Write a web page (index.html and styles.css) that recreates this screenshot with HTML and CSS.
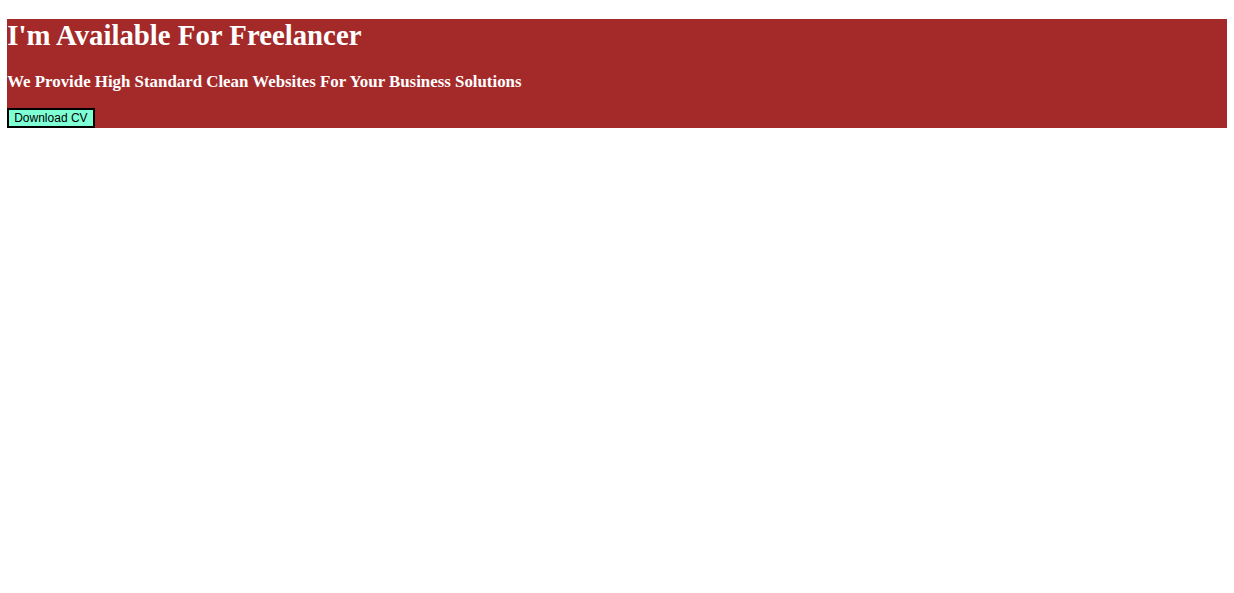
FILE: index.html
```html
<!DOCTYPE html>
<html>
<head>
<meta charset="utf-8">
<link rel="stylesheet" href="styles.css">
</head>
<body>
<div class="hero">
  <h1 class="hero-title">I'm Available For Freelancer</h1>
  <h3 class="hero-sub">We Provide High Standard Clean Websites For Your Business Solutions</h3>
  <button class="cv-btn">Download CV</button>
</div>
</body>
</html>
```
FILE: styles.css
```css
body {
  margin: 0 7.2px 7.2px;
  font-family: "Liberation Serif", "Times New Roman", serif;
}
.hero {
  background: #a42a2a;
  color: #ffffff;
}
.hero-title {
  font-size: 28.8px;
  margin: 19.3px 0;
}
.hero-sub {
  font-size: 16.85px;
  margin: 16.85px 0;
}
.cv-btn {
  display: block;
  font-family: "Liberation Sans", Arial, sans-serif;
  font-size: 12px;
  background: #7fffd4;
  border: 2px solid #000;
  color: #000;
  padding: 0.6px 5px;
  margin: 0;
}
```
